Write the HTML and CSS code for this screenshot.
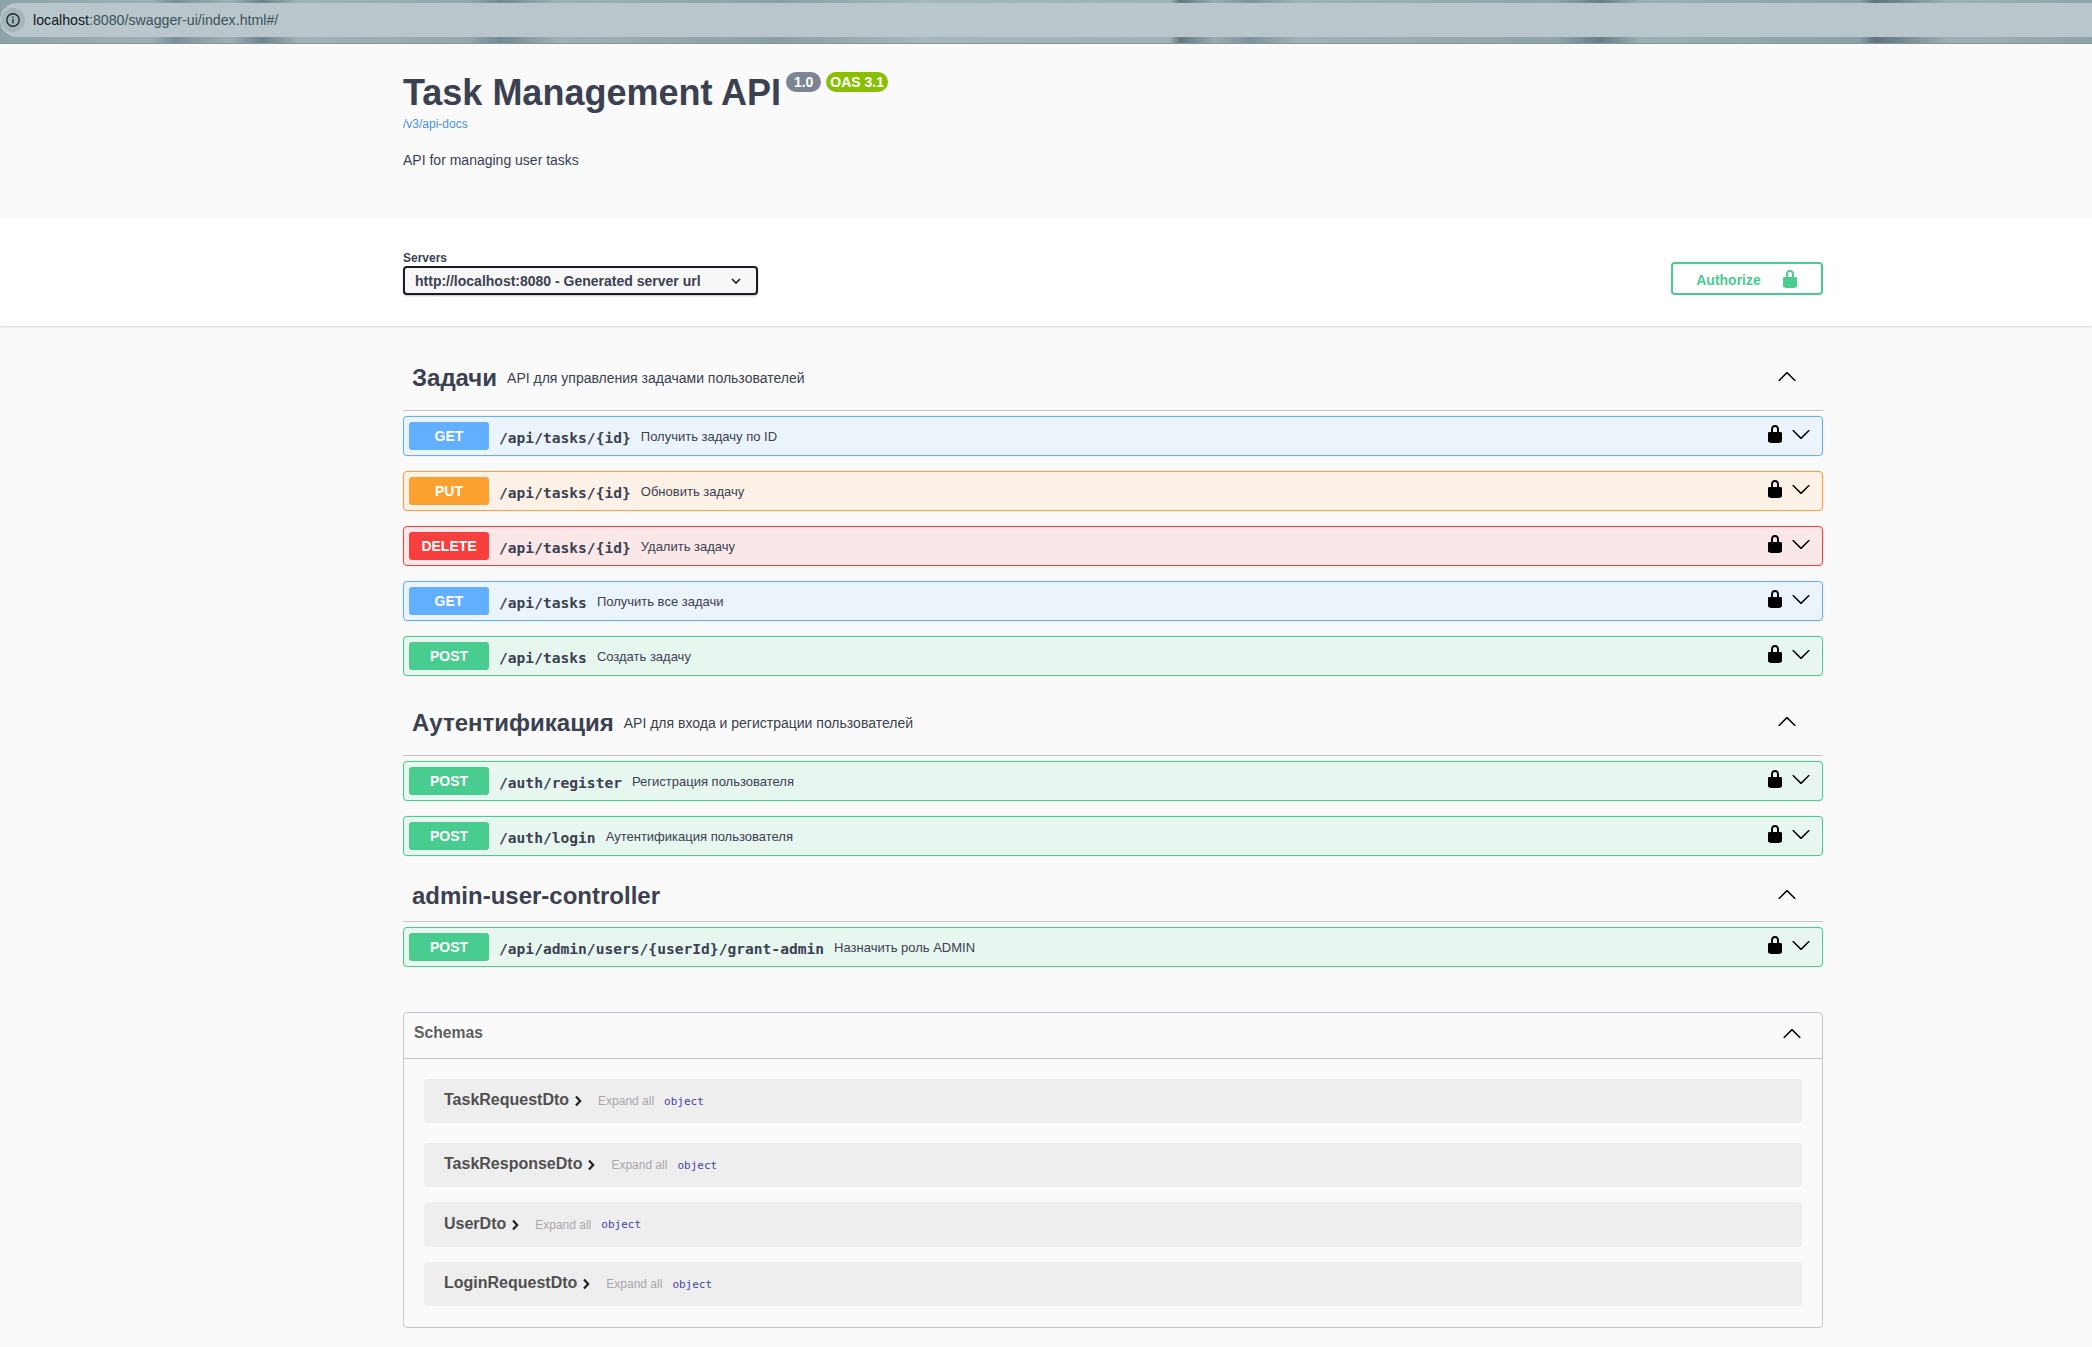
FILE: index.html
```html
<!DOCTYPE html>
<html lang="ru">
<head>
  <meta charset="UTF-8" />
  <title>Swagger UI</title>
  <link rel="stylesheet" href="styles.css">
</head>
<body>
  <svg class="defs" width="0" height="0">
    <symbol id="lock" viewBox="0 0 20 20"><path d="M15.8 8H14V5.6C14 2.703 12.665 1 10 1 7.334 1 6 2.703 6 5.6V8H4c-.553 0-1 .646-1 1.199V17c0 .549.428 1.139.951 1.307l1.197.387C5.672 18.861 6.55 19 7.1 19h5.8c.549 0 1.428-.139 1.951-.307l1.196-.387c.524-.167.953-.757.953-1.306V9.199C17 8.646 16.352 8 15.8 8zM12 8H8V5.199C8 3.754 8.797 3 10 3s2 .754 2 2.199V8z"/></symbol>
    <symbol id="arrow-down" viewBox="0 0 20 20"><path d="M17.418 6.109c.272-.268.709-.268.979 0s.271.701 0 .969l-7.908 7.83c-.27.268-.707.268-.979 0l-7.908-7.83c-.27-.268-.27-.701 0-.969.271-.268.709-.268.979 0L10 13.25l7.418-7.141z"/></symbol>
    <symbol id="arrow-up" viewBox="0 0 20 20"><path d="M2.582 13.891c-.272.268-.709.268-.979 0s-.271-.701 0-.969l7.908-7.83c.27-.268.707-.268.979 0l7.908 7.83c.27.268.27.701 0 .969-.271.268-.709.268-.978 0L10 6.75l-7.418 7.141z"/></symbol>
    <symbol id="arrow-right" viewBox="0 0 8 12"><path d="M2 1.5 6.2 6 2 10.5" fill="none" stroke="#222" stroke-width="2.2"/></symbol>
  </svg>

  <div class="browser-bar">
    <div class="address">
      <span class="site-info"><svg viewBox="0 0 16 16" width="16" height="16"><circle cx="8" cy="8" r="6.2" fill="none" stroke="#1f2a30" stroke-width="1.4"/><rect x="7.3" y="7" width="1.4" height="4.4" fill="#1f2a30"/><rect x="7.3" y="4.6" width="1.4" height="1.4" fill="#1f2a30"/></svg></span>
      <span class="url"><b>localhost</b>:8080/swagger-ui/index.html#/</span>
    </div>
  </div>

  <header class="info">
    <div class="wrap">
      <div class="title-line">
        <h1>Task Management API</h1>
        <span class="badge version">1.0</span>
        <span class="badge oas">OAS 3.1</span>
      </div>
      <a class="docs-link" href="#">/v3/api-docs</a>
      <p class="description">API for managing user tasks</p>
    </div>
  </header>

  <section class="scheme">
    <div class="wrap scheme-row">
      <div class="servers">
        <span class="servers-title">Servers</span>
        <div class="select">
          <span>http://localhost:8080 - Generated server url</span>
          <svg class="select-arrow" width="10" height="6" viewBox="0 0 10 6"><path d="M1 1l4 4 4-4" fill="none" stroke="#222" stroke-width="1.7"/></svg>
        </div>
      </div>
      <button class="authorize"><span class="authorize-text">Authorize</span> <svg width="20" height="20"><use href="#lock"/></svg></button>
    </div>
  </section>

  <main class="wrap">
    <section class="tag tag-first">
      <div class="tag-head">
        <h3>Задачи</h3>
        <span class="tag-desc">API для управления задачами пользователей</span>
        <svg class="tag-arrow" width="20" height="20"><use href="#arrow-up"/></svg>
      </div>
      <div class="op get">
        <span class="method">GET</span><span class="path">/api/tasks/{id}</span><span class="summary">Получить задачу по ID</span>
        <svg class="op-lock" width="20" height="20"><use href="#lock"/></svg><svg class="op-arrow" width="20" height="20"><use href="#arrow-down"/></svg>
      </div>
      <div class="op put">
        <span class="method">PUT</span><span class="path">/api/tasks/{id}</span><span class="summary">Обновить задачу</span>
        <svg class="op-lock" width="20" height="20"><use href="#lock"/></svg><svg class="op-arrow" width="20" height="20"><use href="#arrow-down"/></svg>
      </div>
      <div class="op delete">
        <span class="method">DELETE</span><span class="path">/api/tasks/{id}</span><span class="summary">Удалить задачу</span>
        <svg class="op-lock" width="20" height="20"><use href="#lock"/></svg><svg class="op-arrow" width="20" height="20"><use href="#arrow-down"/></svg>
      </div>
      <div class="op get">
        <span class="method">GET</span><span class="path">/api/tasks</span><span class="summary">Получить все задачи</span>
        <svg class="op-lock" width="20" height="20"><use href="#lock"/></svg><svg class="op-arrow" width="20" height="20"><use href="#arrow-down"/></svg>
      </div>
      <div class="op post">
        <span class="method">POST</span><span class="path">/api/tasks</span><span class="summary">Создать задачу</span>
        <svg class="op-lock" width="20" height="20"><use href="#lock"/></svg><svg class="op-arrow" width="20" height="20"><use href="#arrow-down"/></svg>
      </div>
    </section>

    <section class="tag">
      <div class="tag-head">
        <h3>Аутентификация</h3>
        <span class="tag-desc">API для входа и регистрации пользователей</span>
        <svg class="tag-arrow" width="20" height="20"><use href="#arrow-up"/></svg>
      </div>
      <div class="op post">
        <span class="method">POST</span><span class="path">/auth/register</span><span class="summary">Регистрация пользователя</span>
        <svg class="op-lock" width="20" height="20"><use href="#lock"/></svg><svg class="op-arrow" width="20" height="20"><use href="#arrow-down"/></svg>
      </div>
      <div class="op post">
        <span class="method">POST</span><span class="path">/auth/login</span><span class="summary">Аутентификация пользователя</span>
        <svg class="op-lock" width="20" height="20"><use href="#lock"/></svg><svg class="op-arrow" width="20" height="20"><use href="#arrow-down"/></svg>
      </div>
    </section>

    <section class="tag tag-admin">
      <div class="tag-head">
        <h3>admin-user-controller</h3>
        <svg class="tag-arrow" width="20" height="20"><use href="#arrow-up"/></svg>
      </div>
      <div class="op post">
        <span class="method">POST</span><span class="path">/api/admin/users/{userId}/grant-admin</span><span class="summary">Назначить роль ADMIN</span>
        <svg class="op-lock" width="20" height="20"><use href="#lock"/></svg><svg class="op-arrow" width="20" height="20"><use href="#arrow-down"/></svg>
      </div>
    </section>

    <section class="schemas">
      <div class="schemas-head">
        <h4>Schemas</h4>
        <svg width="20" height="20"><use href="#arrow-up"/></svg>
      </div>
      <div class="schemas-body">
        <div class="model">
          <span class="model-name">TaskRequestDto</span><svg class="model-arrow" width="8" height="12"><use href="#arrow-right"/></svg><span class="expand">Expand all</span><span class="type">object</span>
        </div>
        <div class="model">
          <span class="model-name">TaskResponseDto</span><svg class="model-arrow" width="8" height="12"><use href="#arrow-right"/></svg><span class="expand">Expand all</span><span class="type">object</span>
        </div>
        <div class="model model-tall">
          <span class="model-name">UserDto</span><svg class="model-arrow" width="8" height="12"><use href="#arrow-right"/></svg><span class="expand">Expand all</span><span class="type">object</span>
        </div>
        <div class="model">
          <span class="model-name">LoginRequestDto</span><svg class="model-arrow" width="8" height="12"><use href="#arrow-right"/></svg><span class="expand">Expand all</span><span class="type">object</span>
        </div>
      </div>
    </section>
  </main>
</body>
</html>
```

FILE: styles.css
```css
html, body { margin: 0; padding: 0; }
body { background: #fafafa; font-family: "Liberation Sans", Arial, sans-serif; color: #3b4151; overflow: hidden; }
.defs { position: absolute; }
.wrap { width: 1420px; margin-left: 403px; }

/* browser chrome */
.browser-bar { height: 44px; box-sizing: border-box; padding-top: 3px; border-bottom: 1px solid #82979c; background: linear-gradient(90deg, #8ea3a8 0, #9db0b5 150px, #7d9298 175px, #9db0b5 230px, #6f868c 262px, #a1b3b7 300px, #93a7ac 470px, #728a90 500px, #9fb1b5 560px, #8ba0a5 780px, #a6b6ba 920px, #a0b2b6 1170px, #64797f 1180px, #98acb1 1215px, #7e949a 1250px, #a0b2b6 1300px, #8fa4a9 1560px, #687e84 1600px, #9ab0b4 1640px, #8ba1a6 1860px, #5f757b 1875px, #9fb1b5 1950px, #8fa4a9 2092px); }
.address { height: 34px; background: #b9c6cb; display: flex; align-items: center; border-radius: 17px 0 0 17px; }
.site-info { width: 24px; height: 24px; margin: 0 8px 0 1px; background: #a6b5ba; border-radius: 50%; display: flex; align-items: center; justify-content: center; }
.url { font-size: 14.2px; color: #40525a; }
.url b { font-weight: normal; color: #11181c; }

/* info */
.info { height: 174px; box-sizing: border-box; padding-top: 25px; }
.title-line { display: flex; align-items: flex-start; height: 44px; }
h1 { margin: 0; font-size: 36px; line-height: 48px; font-weight: bold; color: #3b4151; }
.badge { margin-top: 3px; height: 20px; line-height: 20px; border-radius: 10px; color: #fff; font-size: 14px; font-weight: bold; text-align: center; }
.version { margin-left: 5px; width: 35px; background: #7d8492; }
.oas { margin-left: 5px; width: 62px; background: #89bf04; }
.docs-link { display: block; margin-top: 3px; font-size: 12px; line-height: 16px; color: #4990e2; text-decoration: none; }
.description { margin: 19px 0 0; font-size: 14px; line-height: 18px; }

/* servers row */
.scheme { height: 108px; box-sizing: border-box; background: #fff; box-shadow: 0 1px 2px 0 rgba(0,0,0,.15); padding-top: 32px; }
.scheme-row { display: flex; justify-content: space-between; align-items: flex-end; height: 45px; }
.servers-title { display: block; font-size: 12px; line-height: 16px; font-weight: bold; }
.select { width: 355px; height: 29px; box-sizing: border-box; padding: 0 15px 0 10px; display: flex; justify-content: space-between; align-items: center; background: #f7f7f7; border: 2px solid #1c1c20; border-radius: 4px; box-shadow: 0 1px 2px 0 rgba(0,0,0,.25); font-size: 14px; font-weight: bold; }
.authorize { width: 152px; height: 33px; padding: 1px 0 0 2px; display: flex; align-items: center; justify-content: center; gap: 19px; background: transparent; border: 2px solid #49cc90; border-radius: 4px; color: #49cc90; font: bold 14px "Liberation Sans", Arial, sans-serif; fill: #49cc90; }
.authorize-text { padding-top: 2px; }

/* tags and operations */
.tag { margin-top: 30px; }
.tag-first { margin-top: 35px; }
.tag-admin { margin-top: 26px; }
.tag-head { height: 50px; box-sizing: border-box; margin-bottom: 5px; padding: 0 26px 16px 9px; display: flex; align-items: center; border-bottom: 1px solid #c4c5c8; }
.tag-admin .tag-head { height: 40px; padding-bottom: 11px; }
.tag-head h3 { margin: 0; font-size: 24px; font-weight: bold; }
.tag-desc { margin-left: 10px; font-size: 14px; }
.tag-arrow { margin-left: auto; margin-bottom: 2px; }
.op { height: 40px; box-sizing: border-box; margin-bottom: 15px; padding: 0 11px 0 5px; display: flex; align-items: center; border: 1px solid; border-radius: 4px; box-shadow: 0 0 2px rgba(0,0,0,.12); }
.op:last-child { margin-bottom: 0; }
.method { width: 80px; height: 28px; line-height: 28px; margin-right: 10px; border-radius: 3px; background: #000; color: #fff; font-size: 14px; font-weight: bold; text-align: center; }
.path { padding-top: 2px; font-family: "DejaVu Sans Mono", monospace; font-size: 14.6px; font-weight: bold; }
.summary { margin-left: 10px; font-size: 13px; }
.op-lock { margin-left: auto; margin-right: 6px; margin-bottom: 4px; }
.op-arrow { margin-bottom: 4px; }
.get { background: #ebf3fb; border-color: #61affe; }
.get .method { background: #61affe; }
.put { background: #fcf1e6; border-color: #fca130; }
.put .method { background: #fca130; }
.delete { background: #fae7e7; border-color: #f93e3e; }
.delete .method { background: #f93e3e; }
.post { background: #e7f6ef; border-color: #49cc90; }
.post .method { background: #49cc90; }

/* schemas */
.schemas { margin-top: 45px; border: 1px solid #c4c5c8; border-radius: 4px; height: 316px; box-sizing: border-box; }
.schemas-head { height: 46px; box-sizing: border-box; padding: 0 20px 3px 10px; display: flex; align-items: center; justify-content: space-between; border-bottom: 1px solid #c4c5c8; }
.schemas-head h4 { margin: 0 0 3px; font-size: 15.7px; font-weight: bold; color: #606060; }
.schemas-body { padding: 20px 20px 0; }
.model { height: 44px; margin-bottom: 15px; padding-left: 20px; display: flex; align-items: center; background: #eee; border-radius: 4px; }
.model:first-child { margin-bottom: 20px; }
.model-tall { height: 45px; }
.model-name { padding-bottom: 2px; font-size: 16px; font-weight: bold; color: #505050; }
.model-arrow { margin-left: 5px; }
.expand { margin-left: 16px; font-size: 12px; color: #a8a8a8; }
.type { margin-left: 10px; font-family: "DejaVu Sans Mono", monospace; font-size: 11px; color: #4444a8; }
```
